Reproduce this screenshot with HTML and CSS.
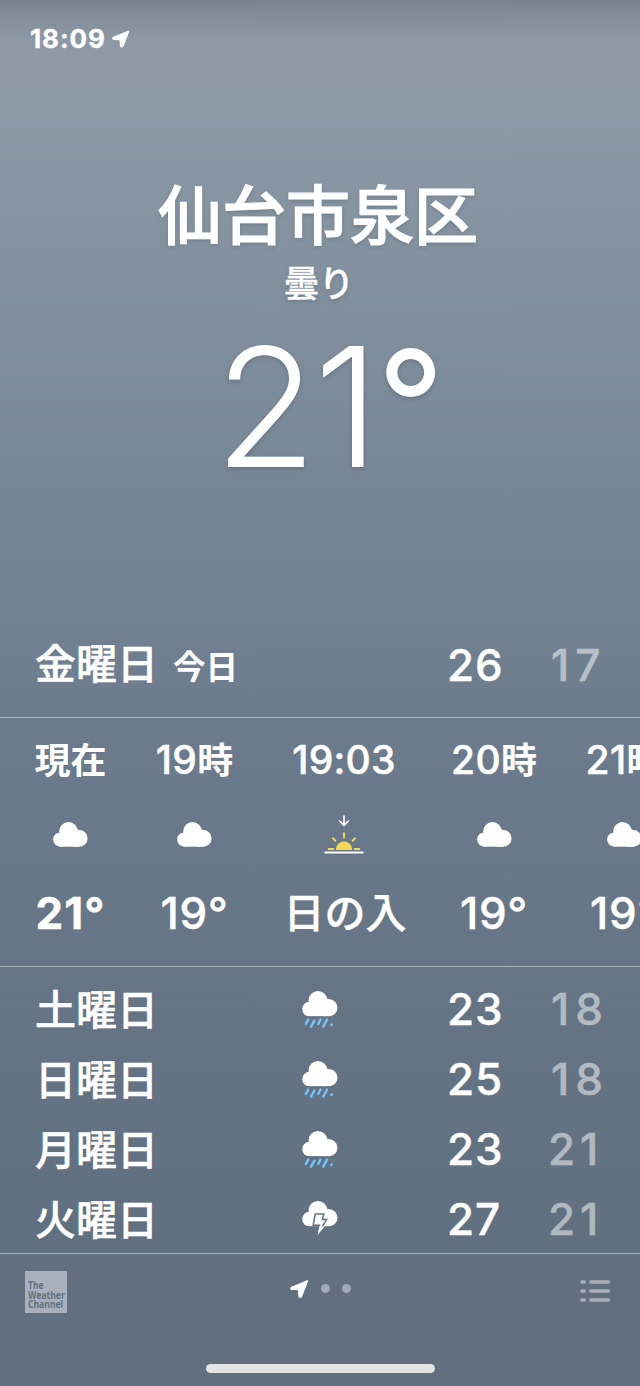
FILE: index.html
```html
<!DOCTYPE html>
<html lang="ja">
<head>
<meta charset="utf-8">
<title>天気</title>
<link rel="stylesheet" href="styles.css">
</head>
<body>
<svg class="defs" aria-hidden="true">
  <symbol id="cloud" viewBox="0 0 35 25"><g fill="#fff"><circle cx="15.5" cy="9.3" r="9.2"/><circle cx="26.3" cy="16.4" r="8.3"/><circle cx="7.2" cy="17.6" r="7.1"/><path d="M7.2 11H24V24.7H7.2Z"/><path d="M23 5.5Q24.2 8.1 27 8.2V24.7H20Z"/></g></symbol>
  <symbol id="arrow" viewBox="0 0 18 18"><path d="M16.3 1.6 1.2 7.9Q.9 8.9 1.6 9L8.4 9.4 8.8 16.2Q9.6 17 10.6 16.1Z" fill="#fff" stroke="#fff" stroke-width="1.8" stroke-linejoin="round"/></symbol>
  <symbol id="rain" viewBox="0 0 36 38"><use href="#cloud" width="36" height="25.6"/><path d="M6.2 28.6 3.9 33M12.4 29.6 9 35.6M18.5 28.6 16.2 33M25 28.6 21.3 35.6M29.8 33.4 29.4 34" stroke="#76c5fb" stroke-width="2.4" stroke-linecap="round" fill="none"/></symbol>
  <symbol id="storm" viewBox="0 0 36 38"><use href="#cloud" width="36" height="25.6"/><path d="M13.2 13 21.8 13 20.4 18.6 24.6 18.6 15.9 32.5 17.4 24.3 11.2 24.3Z" fill="#fff" stroke="#627182" stroke-width="1.5"/><path d="M17.3 25.3 22.8 25.3 15.6 34Z" fill="#fff"/></symbol>
</svg>
<main class="screen">
  <header class="status"><span class="clock">18:09</span><svg class="status-arrow"><use href="#arrow"/></svg></header>
  <section class="current">
    <h1 class="city">仙台市泉区</h1>
    <p class="condition">曇り</p>
    <p class="now-temp"><span>21</span><span class="now-degree">°</span></p>
  </section>
  <section class="row today">
    <div class="day">金曜日<span class="today-tag">今日</span></div><div></div>
    <div class="high">26</div><div class="low teens">17</div>
  </section>
  <section class="hourly">
    <div class="hour is-now"><div class="time"><b>現在</b></div><svg class="cloud"><use href="#cloud"/></svg><div class="temp">21°</div></div>
    <div class="hour"><div class="time">19<b>時</b></div><svg class="cloud"><use href="#cloud"/></svg><div class="temp">19°</div></div>
    <div class="hour"><div class="time">19:03</div>
      <svg class="sunset" viewBox="0 0 40 40"><g fill="none" stroke-linecap="round"><path d="M20 1V9.5M15.7 6 20 10.3 24.3 6" stroke="#fff" stroke-width="1.6"/><path d="M20 18.2V22.5M8.8 23.3 11.4 25.8M31.2 23.3 28.6 25.8M4.8 34H9.2M30.8 34H35.2" stroke="#f8d857" stroke-width="1.9"/><path d="M1.3 37.4H38.7" stroke="#fff" stroke-width="2"/></g><path d="M12 35C12 23.5 28 23.5 28 35Z" fill="#f8d857"/></svg>
      <div class="temp sunset-label">日の入</div></div>
    <div class="hour"><div class="time">20<b>時</b></div><svg class="cloud"><use href="#cloud"/></svg><div class="temp">19°</div></div>
    <div class="hour"><div class="time">21<b>時</b></div><svg class="cloud"><use href="#cloud"/></svg><div class="temp">19°</div></div>
  </section>
  <section class="daily">
    <div class="row"><div class="day">土曜日</div><svg class="icon"><use href="#rain"/></svg><div class="high">23</div><div class="low teens">18</div></div>
    <div class="row"><div class="day">日曜日</div><svg class="icon"><use href="#rain"/></svg><div class="high">25</div><div class="low teens">18</div></div>
    <div class="row"><div class="day">月曜日</div><svg class="icon"><use href="#rain"/></svg><div class="high">23</div><div class="low">21</div></div>
    <div class="row"><div class="day">火曜日</div><svg class="icon"><use href="#storm"/></svg><div class="high">27</div><div class="low">21</div></div>
  </section>
  <footer class="bar">
    <div class="logo"><div class="logo-text">The<br>Weather<br>Channel</div></div>
    <div class="pages"><svg class="page-arrow"><use href="#arrow"/></svg><i class="dot"></i><i class="dot"></i></div>
    <svg class="list" viewBox="0 0 30 22" fill="none" stroke="#a8b1bb" stroke-width="3.7" stroke-linecap="round"><path d="M2 2H4.2M2 11H4.2M2 20H4.2M11 2H28.2M11 11H28.2M11 20H28.2"/></svg>
  </footer>
  <div class="home"></div>
</main>
</body>
</html>
```

FILE: styles.css
```css
* { box-sizing: border-box; margin: 0; padding: 0; }
body { width: 640px; height: 1386px; overflow: hidden; }
.defs { display: none; }
.screen {
  display: flex; flex-direction: column;
  width: 640px; height: 1386px; overflow: hidden;
  color: #fff;
  font-family: Inter, "Noto Sans CJK JP", sans-serif;
  font-weight: 500;
  background: linear-gradient(#77838d 0, #808c97 14px, #8c99a5 40px, #8e9ba7 70px, #8896a3 180px, #788796 480px, #718090 640px, #69788a 810px, #667586 980px, #617080 1250px, #616e7e 1386px);
}
.status { display: flex; align-items: center; height: 78px; padding-left: 30px; gap: 6px; }
.clock { font-size: 26px; font-weight: 700; letter-spacing: 0.9px; line-height: 32px; -webkit-text-stroke: .3px #fff; }
.status-arrow { width: 18px; height: 18px; }
.current { height: 539px; padding-top: 92px; text-align: center; text-shadow: 0 2px 4px rgba(40, 55, 70, .25); }
.city { font-size: 64px; line-height: 92px; font-weight: 500; padding-right: 4px; -webkit-text-stroke: 1.2px #fff; }
.condition { padding-right: 3px; font-size: 36px; line-height: 44px; letter-spacing: -1px; font-weight: 500; -webkit-text-stroke: .3px #fff; }
.now-temp { display: flex; justify-content: center; margin-top: 1px; padding-left: 19px; font-size: 166px; line-height: 200px; font-weight: 300; letter-spacing: -2.5px; }
.now-degree { margin-top: -3px; font-size: 148px; font-weight: 400; letter-spacing: 0; }
.row { display: grid; grid-template-columns: 265px 110px 129px 136px; align-items: center; height: 70px; }
.day { padding: 2px 0 0 35px; font-size: 41px; line-height: 60px; font-weight: 500; white-space: nowrap; -webkit-text-stroke: .5px #fff; }
.today-tag { margin-left: 15px; font-size: 32.5px; font-weight: 700; -webkit-text-stroke: 0; }
.high, .low { font-size: 44px; line-height: 60px; padding-bottom: 1px; -webkit-text-stroke: .4px currentColor; }
.high { padding-left: 72px; letter-spacing: .8px; }
.low { padding-left: 44px; letter-spacing: 5px; opacity: .5; }
.teens { padding-left: 47px; letter-spacing: 6px; }
.today { height: 100px; padding-bottom: 4px; }
.hourly {
  display: grid; grid-template-columns: 121px 127px 172px 128px 132px;
  height: 250px; padding-left: 10px; overflow: hidden;
  border-top: 1px solid #a5b1bd; border-bottom: 1px solid #a5b1bd;
}
.hour { display: grid; grid-template-rows: 84px 64px 94px; place-items: center; }
.time { font-size: 39px; line-height: 60px; letter-spacing: .3px; white-space: nowrap; -webkit-text-stroke: .5px #fff; }
.time b { font-size: 36px; font-weight: 700; letter-spacing: 0; -webkit-text-stroke: 0; }
.temp { font-size: 44px; line-height: 60px; letter-spacing: .6px; white-space: nowrap; -webkit-text-stroke: .4px #fff; }
.is-now .temp { font-weight: 700; letter-spacing: 1px; }
.sunset-label { padding-left: 2px; font-size: 41px; letter-spacing: 0; }
.cloud { width: 35px; height: 25px; }
.sunset { width: 40px; height: 40px; margin-top: 2px; }
.daily { height: 286px; padding-top: 7px; }
.icon { width: 36px; height: 38px; margin: 1px 0 0 37px; }
.bar { display: grid; grid-template-columns: 42px 1fr 30px; height: 76px; padding: 17px 30px 0 25px; border-top: 1px solid #a5b1bd; }
.logo { width: 42px; height: 42px; padding: 10px 0 0 3px; background: #a8b1bb; color: #617080; }
.logo-text { width: 50px; font: 700 10.5px/9.6px "Noto Sans", sans-serif; transform: scaleX(.82); transform-origin: left; }
.pages { display: flex; align-items: center; height: 35px; gap: 12px; padding-left: 223px; }
.page-arrow { width: 19px; height: 20px; }
.dot { width: 9px; height: 9px; border-radius: 50%; background: #a1aab5; }
.list { width: 30px; height: 22px; margin-top: 9px; }
.home { width: 229px; height: 9px; margin: 35px auto 0; border-radius: 5px; background: #e3e3e3; }
```
